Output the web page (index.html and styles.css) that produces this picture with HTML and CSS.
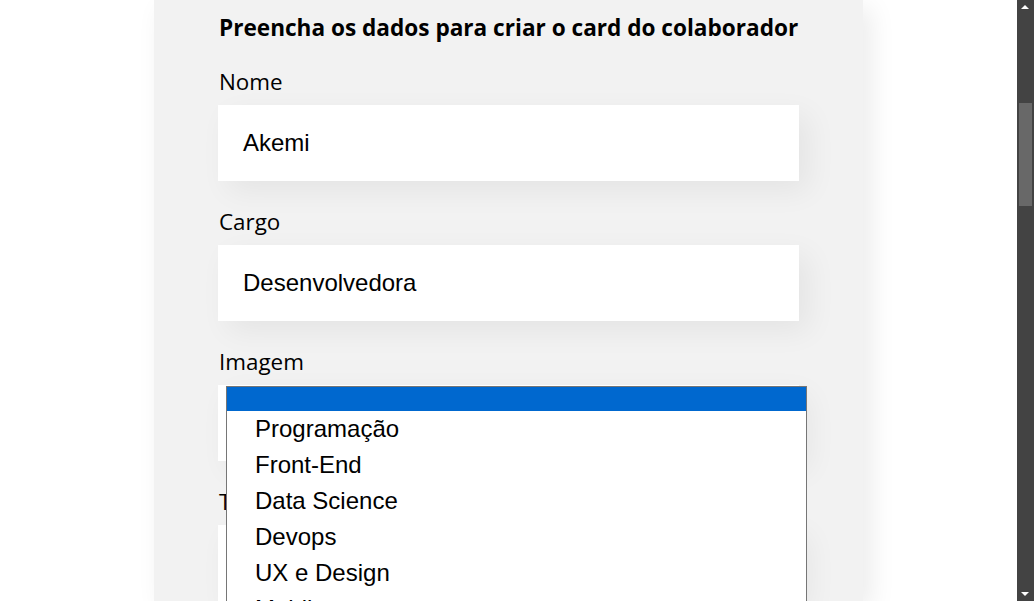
FILE: index.html
```html
<!DOCTYPE html>
<html lang="pt-BR">
<head>
<meta charset="utf-8">
<title>Organo</title>
<link rel="stylesheet" href="styles.css">
</head>
<body>
<div class="window">
  <main class="page">
    <section class="form-panel">
      <form class="form">
        <h2 class="form-title">Preencha os dados para criar o card do colaborador</h2>
        <div class="field">
          <label class="field-label">Nome</label>
          <div class="field-input">Akemi</div>
        </div>
        <div class="field">
          <label class="field-label">Cargo</label>
          <div class="field-input">Desenvolvedora</div>
        </div>
        <div class="field field-open">
          <label class="field-label">Imagem</label>
          <div class="field-input"></div>
          <ul class="dropdown">
            <li class="dropdown-item dropdown-item-active"></li>
            <li class="dropdown-item">Programação</li>
            <li class="dropdown-item">Front-End</li>
            <li class="dropdown-item">Data Science</li>
            <li class="dropdown-item">Devops</li>
            <li class="dropdown-item">UX e Design</li>
            <li class="dropdown-item">Mobile</li>
          </ul>
        </div>
        <div class="field">
          <label class="field-label">Time</label>
          <div class="field-input"></div>
        </div>
      </form>
    </section>
  </main>
  <div class="scrollbar">
    <div class="scroll-arrow scroll-arrow-up"></div>
    <div class="scroll-track">
      <div class="scroll-thumb"></div>
    </div>
    <div class="scroll-arrow scroll-arrow-down"></div>
  </div>
</div>
</body>
</html>
```
FILE: styles.css
```css
html, body {
  margin: 0;
  padding: 0;
  height: 100%;
  overflow: hidden;
  background: #ffffff;
}

.window {
  display: flex;
  height: 100%;
}

.page {
  flex: 1;
  display: flex;
  justify-content: center;
  overflow: hidden;
}

.form-panel {
  width: 709px;
  background: #f2f2f2;
  box-shadow: 8px 8px 24px rgba(0, 0, 0, 0.08);
  padding: 13px 64px 0;
  box-sizing: border-box;
}

.form {
  display: flex;
  flex-direction: column;
}

.form-title {
  margin: 0 0 22px;
  font-family: "Open Sans", "Noto Sans", sans-serif;
  font-weight: 700;
  font-size: 22.6px;
  line-height: 30px;
  color: #000;
  padding-left: 1px;
}

.field {
  position: relative;
  margin-bottom: 24px;
}

.field-label {
  display: block;
  font-family: "Open Sans", "Noto Sans", sans-serif;
  font-size: 22.4px;
  line-height: 32px;
  padding-top: 1px;
  margin-bottom: 7px;
  color: #000;
  padding-left: 1px;
}

.field-input {
  height: 76px;
  background: #fff;
  box-shadow: 10px 10px 30px rgba(0, 0, 0, 0.06);
  padding: 0 25px;
  box-sizing: border-box;
  display: flex;
  align-items: center;
  font-family: "Liberation Sans", Arial, sans-serif;
  font-size: 24px;
  color: #000;
}

.dropdown {
  position: absolute;
  left: 8px;
  top: 41px;
  width: 581px;
  margin: 0;
  padding: 0;
  list-style: none;
  background: #fff;
  border: 1px solid #767676;
  box-sizing: border-box;
  z-index: 5;
}

.dropdown-item {
  height: 36px;
  line-height: 36px;
  padding-left: 28px;
  font-family: "Liberation Sans", Arial, sans-serif;
  font-size: 24px;
  color: #000;
}

.dropdown-item-active {
  height: 24px;
  background: #0068cf;
}

.scrollbar {
  width: 17px;
  background: #434343;
  display: flex;
  flex-direction: column;
}

.scroll-arrow {
  height: 17px;
  position: relative;
}

.scroll-arrow::after {
  content: "";
  position: absolute;
  left: 4px;
  border-left: 4px solid transparent;
  border-right: 4px solid transparent;
}

.scroll-arrow-up::after {
  top: 5px;
  border-bottom: 4px solid #fff;
}

.scroll-arrow-down::after {
  top: 8px;
  border-top: 4px solid #fff;
}

.scroll-track {
  flex: 1;
  padding: 86px 2px 0;
}

.scroll-thumb {
  height: 103px;
  background: #686868;
}
```
